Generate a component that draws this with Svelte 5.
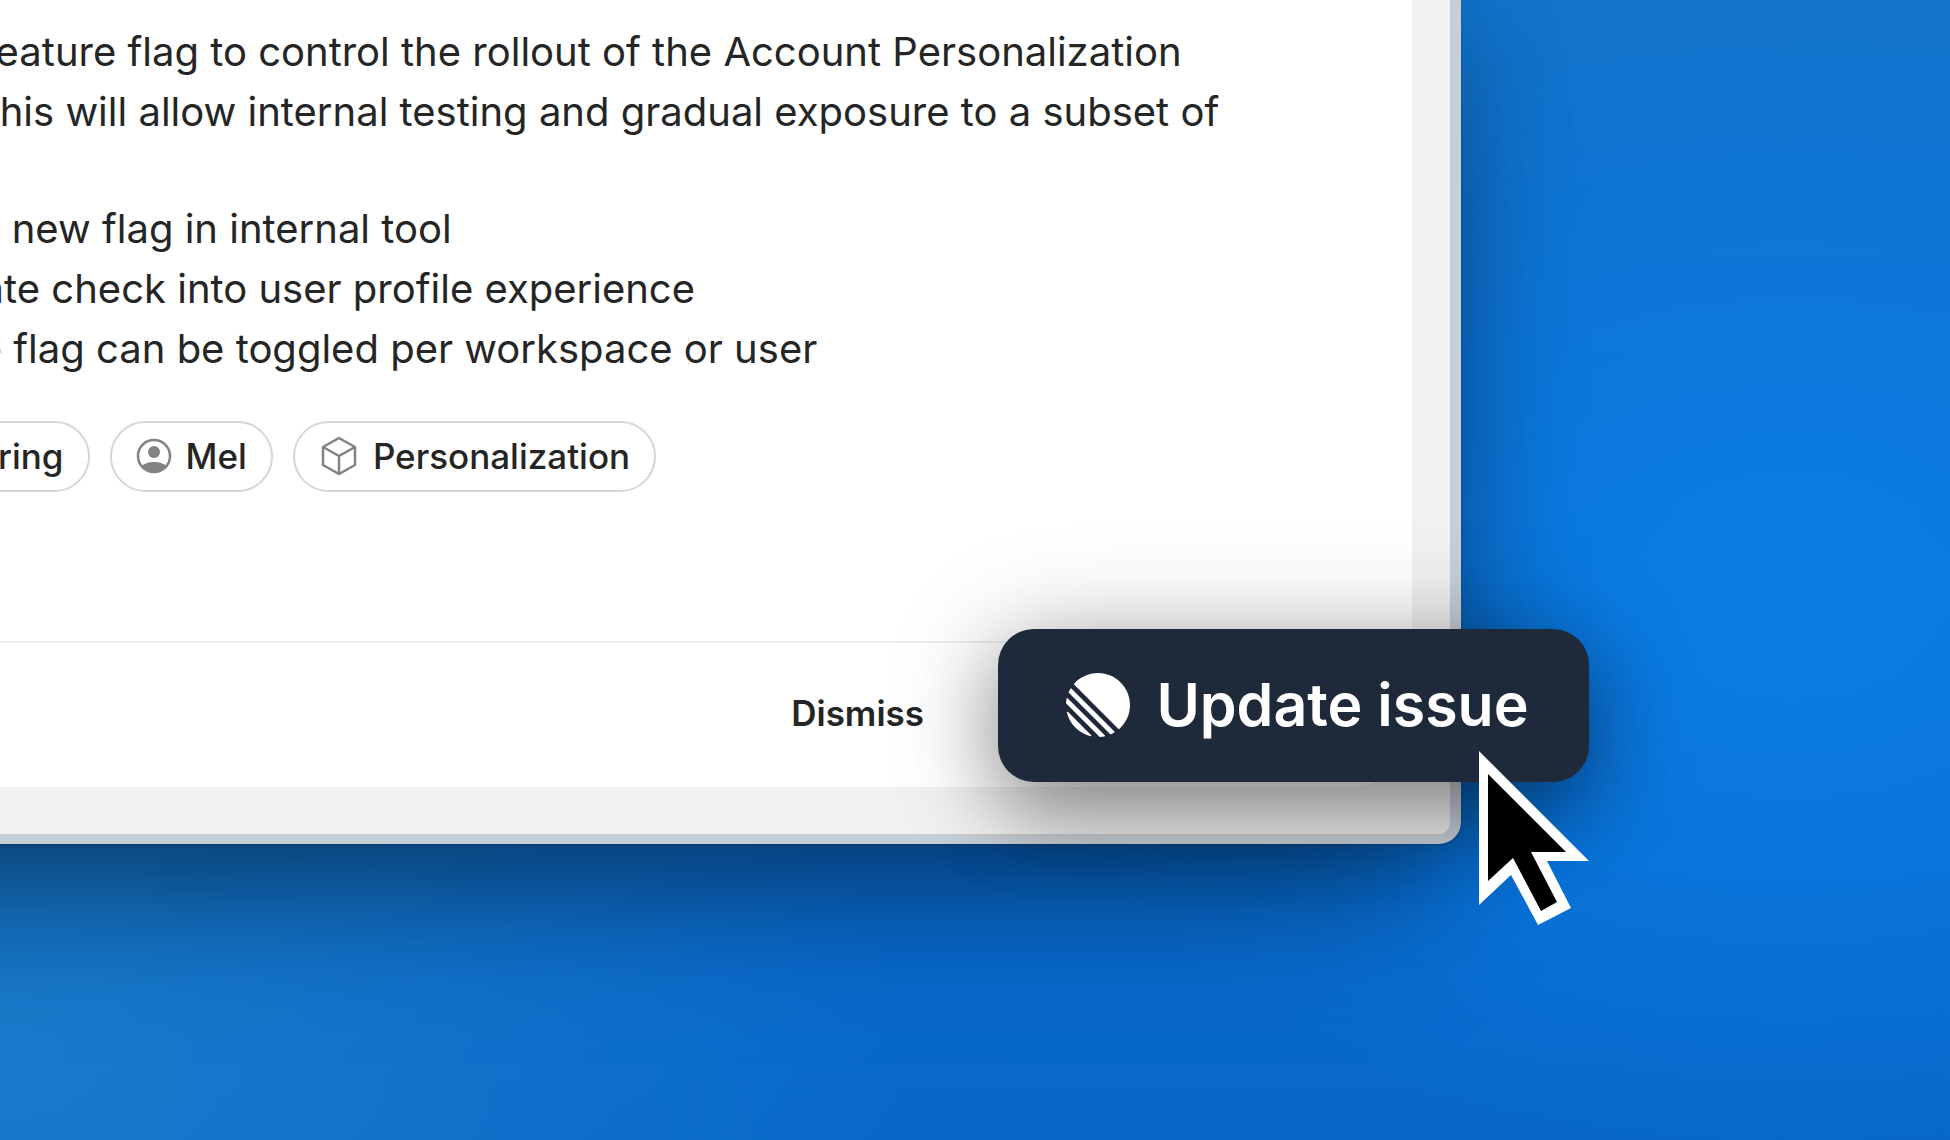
<script lang="ts">
  interface Chip {
    label: string;
    icon?: 'person' | 'cube';
  }

  const paragraph = [
    'w feature flag to control the rollout of the Account Personalization',
    't. This will allow internal testing and gradual exposure to a subset of',
  ];

  const tasks = [
    'ate new flag in internal tool',
    'grate check into user profile experience',
    'the flag can be toggled per workspace or user',
  ];

  const chips: Chip[] = [
    { label: 'ring' },
    { label: 'Mel', icon: 'person' },
    { label: 'Personalization', icon: 'cube' },
  ];
</script>

<main class="desktop">
  <section class="window">
    <div class="panel">
      <div class="body">
        <p class="text">
          {#each paragraph as line}
            <span>{line}</span>
          {/each}
        </p>
        <ul class="text">
          {#each tasks as task}
            <li>{task}</li>
          {/each}
        </ul>
        <div class="chips">
          {#each chips as chip (chip.label)}
            <button class="chip">
              {#if chip.icon === 'person'}
                <svg width="36" height="36" viewBox="0 0 36 36" aria-hidden="true">
                  <circle cx="18" cy="18" r="16" fill="none" stroke="#828282" stroke-width="2.500" />
                  <circle cx="18" cy="14" r="6" fill="#828282" />
                  <path d="M6 28C8 25.500 13 24 18 24s10 1.500 12 4c-3 4-7 6.500-12 6.500S9 32 6 28Z" fill="#828282" />
                </svg>
              {:else if chip.icon === 'cube'}
                <svg width="40" height="40" viewBox="-2 0 40 40" fill="none" stroke="#828282" stroke-width="2.500" stroke-linejoin="round" aria-hidden="true">
                  <path d="M18 2L34 11V29L18 38L2 29V11Z" />
                  <path d="M2 11L18 20L34 11M18 20V38" />
                </svg>
              {/if}
              {chip.label}
            </button>
          {/each}
        </div>
      </div>
      <footer class="footer">
        <button class="dismiss">Dismiss</button>
      </footer>
    </div>

    <button class="update">
      <svg width="64" height="64" viewBox="0 0 100 100" fill="currentColor" aria-hidden="true">
        <path d="M1.225 61.523c-.222-.949.908-1.546 1.597-.857l36.512 36.512c.689.689.092 1.819-.857 1.597C20.052 94.452 5.548 79.949 1.225 61.523Z" />
        <path d="M.002 46.889c-.018.283.089.56.29.761L52.350 99.709c.201.2.477.307.761.289 2.369-.147 4.694-.46 6.962-.926.765-.157 1.030-1.096.478-1.648L2.576 39.449c-.552-.552-1.491-.287-1.648.478-.466 2.268-.778 4.593-.926 6.962Z" />
        <path d="M4.211 29.705c-.167.374-.082.811.207 1.100l64.776 64.776c.290.290.727.374 1.100.208 1.786-.796 3.517-1.693 5.186-2.684.552-.328.637-1.087.183-1.541L8.436 24.337c-.454-.454-1.213-.369-1.541.183-.991 1.668-1.888 3.399-2.684 5.185Z" />
        <path d="M12.659 18.074c-.370-.370-.393-.964-.044-1.354C21.780 6.459 35.111 0 49.952 0 77.593 0 100 22.407 100 50.048c0 14.841-6.459 28.172-16.720 37.338-.390.348-.984.325-1.354-.045L12.659 18.074Z" />
      </svg>
      Update issue
    </button>

    <svg class="cursor" width="112" height="178" viewBox="0 0 112 178" aria-hidden="true">
      <path d="M1 1V155L33 125L60 175L93 158L69 111H111Z" fill="#fff" />
      <path d="M10 24V131L35 108L63 161L79 152L53 102H88Z" fill="#000" />
    </svg>
  </section>
</main>

<style>
  :global(body) {
    overflow: hidden;
  }

  .desktop {
    box-sizing: border-box;
    min-height: 100vh;
    padding-right: 489px;
    overflow: hidden;
    font-family: Inter, "Liberation Sans", sans-serif;
    color: #252525;
    background:
      radial-gradient(ellipse 800px 560px at 92% 52%, #0a7ee5 0%, rgba(10, 126, 229, 0) 100%),
      radial-gradient(ellipse 900px 600px at 0% 92%, #197bcb 0%, rgba(25, 123, 203, 0) 100%),
      linear-gradient(180deg, #1274cb 0%, #0b6dd4 60%, #0768c9 100%);
  }

  .window {
    position: relative;
    margin-left: -362px;
    padding: 0 38px 47px 0;
    background: #f1f1f1;
    border: solid #c7cfd6;
    border-width: 0 11px 10px 0;
    border-radius: 0 0 22px 0;
    box-shadow:
      0 20px 110px rgba(0, 0, 0, 0.24),
      0 90px 140px -40px rgba(0, 0, 0, 0.34),
      0 1px 3px rgba(0, 0, 0, 0.2);
  }

  .panel {
    padding-left: 300px;
    background: #fff;
    border-radius: 0 0 60px 0;
  }

  .body {
    padding: 22px 0 149px;
  }

  .text {
    margin: 0 0 57px;
    padding: 0;
    list-style: none;
    font-size: 40px;
    line-height: 60px;
    white-space: nowrap;
  }

  .text span {
    display: block;
  }

  ul.text {
    margin-bottom: 42px;
    padding-left: 4px;
  }

  .chips {
    display: flex;
    gap: 20px;
  }

  .chip {
    display: flex;
    align-items: center;
    gap: 14px;
    box-sizing: border-box;
    height: 71px;
    padding: 0 24px 2px;
    border: 2px solid #d6d6d6;
    border-radius: 36px;
    background: #fff;
    color: inherit;
    font: 500 35px Inter, "Liberation Sans", sans-serif;
  }

  .chip:first-child {
    padding-left: 58px;
  }

  .footer {
    display: flex;
    justify-content: flex-end;
    padding-right: 488px;
    border-top: 2px solid #efefef;
  }

  .dismiss {
    height: 144px;
    padding: 0 0 4px;
    border: 0;
    background: none;
    color: inherit;
    font: 600 35px Inter, "Liberation Sans", sans-serif;
  }

  .update {
    position: absolute;
    right: -139px;
    bottom: 52px;
    display: flex;
    align-items: center;
    justify-content: center;
    gap: 26px;
    box-sizing: border-box;
    width: 591px;
    height: 153px;
    padding: 0 0 2px 8px;
    border: 0;
    border-radius: 36px;
    background: #1e2939;
    color: #fff;
    font: 600 59px Inter, "Liberation Sans", sans-serif;
    white-space: nowrap;
    box-shadow: 0 36px 80px rgba(0, 0, 0, 0.3), 0 10px 110px rgba(0, 0, 0, 0.28);
  }

  .cursor {
    position: absolute;
    right: -140px;
    bottom: -94px;
  }
</style>
